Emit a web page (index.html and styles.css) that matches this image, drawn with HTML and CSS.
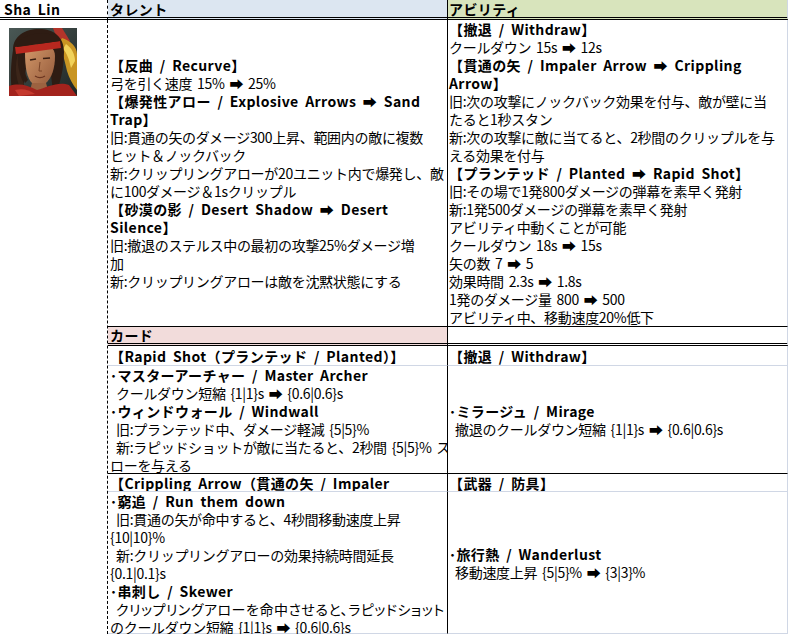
FILE: index.html
```html
<!DOCTYPE html>
<html lang="ja">
<head>
<meta charset="utf-8">
<title>Sha Lin</title>
<link rel="stylesheet" href="styles.css">
</head>
<body>
<div class="sheet">
  <div class="cell a hdr"><div class="b">Sha Lin</div></div>
  <div class="cell bc hdr blue"><div class="b">タレント</div></div>
  <div class="cell cc hdr green"><div class="b">アビリティ</div></div>

  <div class="cell a body">
    <svg class="portrait" width="68" height="68" viewBox="0 0 68 68">
      <defs>
        <linearGradient id="bg" x1="0" y1="0" x2="1" y2="1">
          <stop offset="0" stop-color="#4a5855"/>
          <stop offset="1" stop-color="#1f2625"/>
        </linearGradient>
        <linearGradient id="skin" x1="0" y1="0" x2="1" y2="1">
          <stop offset="0" stop-color="#d59a6b"/>
          <stop offset="1" stop-color="#93593a"/>
        </linearGradient>
      </defs>
      <rect width="68" height="68" fill="url(#bg)"/>
      <path d="M44 0 L53 0 L61 13 L55 21 L48 11 Z" fill="#b3342a"/>
      <path d="M53 10 C62 13 68 19 68 26 L68 62 C64 57 60 50 58 43 C56 34 54 24 49 17 Z" fill="#c99523"/>
      <path d="M57 16 C63 20 66 27 66 33 L62 40 C60 31 58 25 54 21 Z" fill="#f1d25a"/>
      <path d="M4 22 C4 8 16 1 30 1 C45 1 55 9 55 24 C55 35 53 47 50 57 L44 63 L41 40 L17 40 L14 62 L3 64 C1 50 2 35 4 22 Z" fill="#2e1c13"/>
      <path d="M16 24 C16 18 22 16 31 16 C40 16 46 20 46 28 C46 40 43 50 36 56 C32 59 27 59 23 55 C18 50 16 40 16 24 Z" fill="url(#skin)"/>
      <path d="M6 19 L51 13 L52 20 L7 26 Z" fill="#b8281f"/>
      <path d="M7 17 C15 6 30 3 45 7 L51 13 L30 16 L8 19 Z" fill="#2e1c13"/>
      <path d="M9 26 C8 36 10 46 15 56 L11 60 C6 48 6 36 9 26 Z" fill="#3b2519"/>
      <path d="M14 26 C13 34 15 44 19 52 L16 55 C12 46 11 36 14 26 Z" fill="#2e1c13"/>
      <path d="M21 32 L27 31" stroke="#3a1e12" stroke-width="1.6"/>
      <path d="M34 30.5 L41 30" stroke="#3a1e12" stroke-width="1.6"/>
      <path d="M31 34 L30 43 L33 43" stroke="#7a4428" stroke-width="1" fill="none"/>
      <path d="M26 48 C29 50 33 50 36 48" stroke="#6b3520" stroke-width="1.2" fill="none"/>
      <path d="M23 55 L37 55 L39 62 L21 62 Z" fill="#9c6240"/>
      <path d="M0 58 C10 55 18 57 28 62 C38 59 50 53 60 57 L68 68 L0 68 Z" fill="#a3231d"/>
      <path d="M6 62 C14 60 20 62 26 66 L10 68 Z" fill="#c53a2e"/>
    </svg>
  </div>

  <div class="cell bc r-black">
    <div class="b">【反曲 / Recurve】</div>
    <div>弓を引く速度 15% ➡ 25%</div>
    <div class="b">【爆発性アロー / Explosive Arrows ➡ Sand</div>
    <div class="b">Trap】</div>
    <div>旧:貫通の矢のダメージ300上昇、範囲内の敵に複数</div>
    <div>ヒット＆ノックバック</div>
    <div>新:クリップリングアローが20ユニット内で爆発し、敵</div>
    <div>に100ダメージ＆1sクリップル</div>
    <div class="b">【砂漠の影 / Desert Shadow ➡ Desert</div>
    <div class="b">Silence】</div>
    <div>旧:撤退のステルス中の最初の攻撃25%ダメージ増</div>
    <div>加</div>
    <div>新:クリップリングアローは敵を沈黙状態にする</div>
  </div>
  <div class="cell cc r-black">
    <div class="b">【撤退 / Withdraw】</div>
    <div>クールダウン 15s ➡ 12s</div>
    <div class="b">【貫通の矢 / Impaler Arrow ➡ Crippling</div>
    <div class="b">Arrow】</div>
    <div>旧:次の攻撃にノックバック効果を付与、敵が壁に当</div>
    <div>たると1秒スタン</div>
    <div>新:次の攻撃に敵に当てると、2秒間のクリップルを与</div>
    <div>える効果を付与</div>
    <div class="b">【プランテッド / Planted ➡ Rapid Shot】</div>
    <div>旧:その場で1発800ダメージの弾幕を素早く発射</div>
    <div>新:1発500ダメージの弾幕を素早く発射</div>
    <div>アビリティ中動くことが可能</div>
    <div>クールダウン 18s ➡ 15s</div>
    <div>矢の数 7 ➡ 5</div>
    <div>効果時間 2.3s ➡ 1.8s</div>
    <div>1発のダメージ量 800 ➡ 500</div>
    <div>アビリティ中、移動速度20%低下</div>
  </div>

  <div class="cell bc r-double pink"><div class="b">カード</div></div>
  <div class="cell cc r-double"></div>

  <div class="cell bc r-grid"><div class="b">【Rapid Shot（プランテッド / Planted）】</div></div>
  <div class="cell cc r-grid"><div class="b">【撤退 / Withdraw】</div></div>

  <div class="cell bc r-black">
    <div class="b">･マスターアーチャー / Master Archer</div>
    <div class="i">クールダウン短縮 {1|1}s ➡ {0.6|0.6}s</div>
    <div class="b">･ウィンドウォール / Windwall</div>
    <div class="i">旧:プランテッド中、ダメージ軽減 {5|5}%</div>
    <div class="i">新:ラピッドショットが敵に当たると、2秒間 {5|5}% ス</div>
    <div>ローを与える</div>
  </div>
  <div class="cell cc r-black">
    <div class="b">･ミラージュ / Mirage</div>
    <div class="i">撤退のクールダウン短縮 {1|1}s ➡ {0.6|0.6}s</div>
  </div>

  <div class="cell bc r-grid"><div class="b">【Crippling Arrow（貫通の矢 / Impaler</div></div>
  <div class="cell cc r-grid"><div class="b">【武器 / 防具】</div></div>

  <div class="cell bc r-grid top">
    <div class="b">･窮追 / Run them down</div>
    <div class="i">旧:貫通の矢が命中すると、4秒間移動速度上昇</div>
    <div>{10|10}%</div>
    <div class="i">新:クリップリングアローの効果持続時間延長</div>
    <div>{0.1|0.1}s</div>
    <div class="b">･串刺し / Skewer</div>
    <div class="i p">クリップリングアローを命中させると、ラピッドショット</div>
    <div>のクールダウン短縮 {1|1}s ➡ {0.6|0.6}s</div>
  </div>
  <div class="cell cc r-grid">
    <div class="b">･旅行熱 / Wanderlust</div>
    <div class="i">移動速度上昇 {5|5}% ➡ {3|3}%</div>
  </div>
</div>
</body>
</html>
```

FILE: styles.css
```css
html, body {
  margin: 0;
  padding: 0;
  background: #ffffff;
}

body {
  font-family: "Noto Sans CJK JP", "DejaVu Sans", sans-serif;
  font-size: 14px;
  line-height: 18px;
  color: #000000;
  letter-spacing: -0.3px;
  word-spacing: 2px;
}

.sheet {
  display: grid;
  grid-template-columns: 108px 340px 340px;
  grid-template-rows: 20px 307px 19px 20px 108px 18px 142px;
  width: 788px;
}

.cell {
  box-sizing: border-box;
  overflow: hidden;
  white-space: nowrap;
  display: flex;
  flex-direction: column;
  justify-content: center;
}

.a {
  border-right: 1px dashed #000000;
  padding-left: 4px;
}

.a.body {
  grid-row: 2 / 8;
  justify-content: flex-start;
  padding: 8px 0 0 9px;
}

.portrait {
  display: block;
}

.bc {
  border-right: 1px solid #000000;
  padding-left: 2px;
}

.cc {
  border-right: 1px solid #d0d7e5;
  padding-left: 1px;
}

.hdr {
  border-bottom: 3px double #000000;
  line-height: 16px;
}

.blue {
  background: #dce6f1;
}

.green {
  background: #d8e4bc;
}

.pink {
  background: #f2dcdb;
}

.r-black {
  border-bottom: 1px solid #000000;
}

.r-double {
  border-bottom: 3px double #000000;
  line-height: 16px;
}

.r-grid {
  border-bottom: 1px solid #d0d7e5;
}

.top {
  justify-content: flex-start;
  padding-top: 0;
  overflow-y: visible;
  overflow-x: clip;
}

.b {
  font-weight: 700;
  word-spacing: 3px;
  letter-spacing: 0.4px;
}

.i {
  padding-left: 6px;
}

.p {
  font-feature-settings: "palt";
  letter-spacing: 0.5px;
}
```
